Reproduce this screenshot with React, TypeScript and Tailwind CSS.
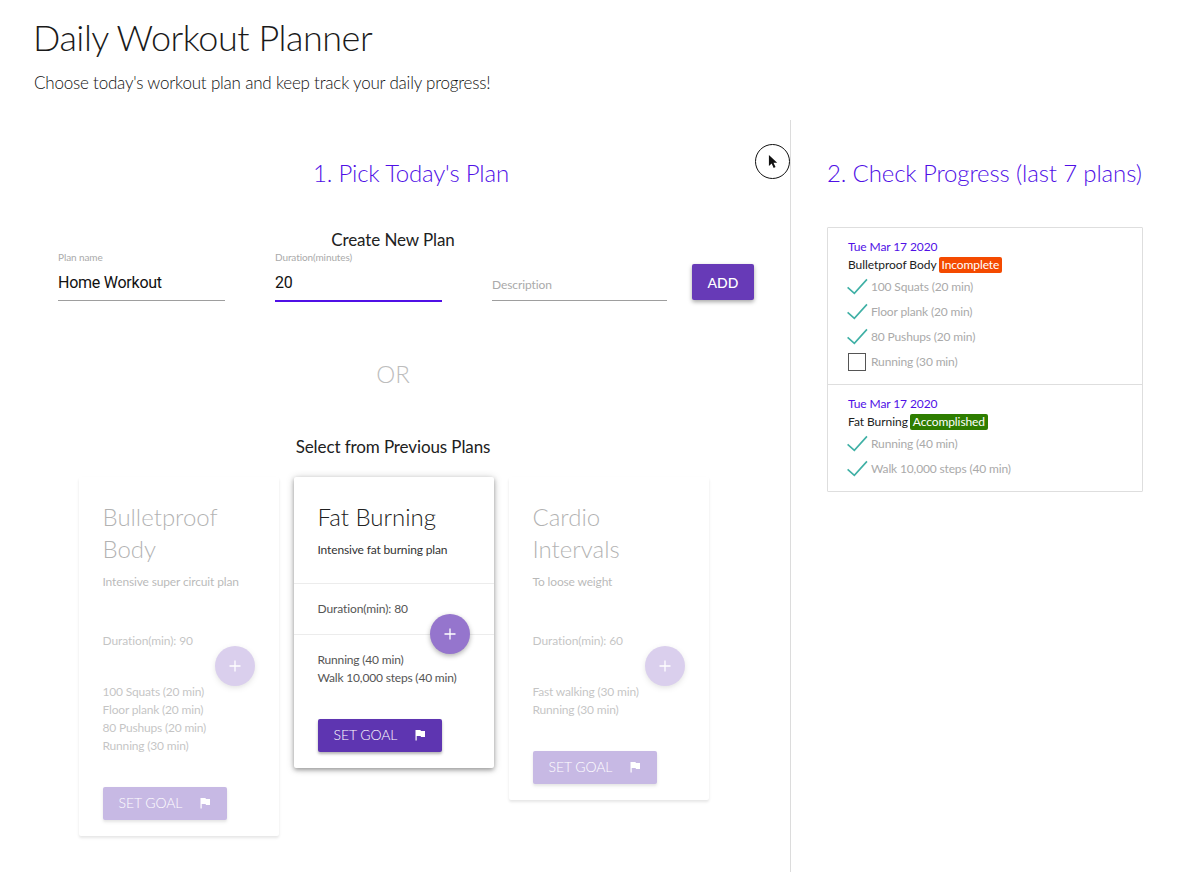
const LATO = "font-['Lato',sans-serif]";

const plans = [
  {
    title: ["Bulletproof", "Body"],
    description: "Intensive super circuit plan",
    duration: 90,
    steps: ["100 Squats (20 min)", "Floor plank (20 min)", "80 Pushups (20 min)", "Running (30 min)"],
    active: false,
  },
  {
    title: ["Fat Burning"],
    description: "Intensive fat burning plan",
    duration: 80,
    steps: ["Running (40 min)", "Walk 10,000 steps (40 min)"],
    active: true,
  },
  {
    title: ["Cardio", "Intervals"],
    description: "To loose weight",
    duration: 60,
    steps: ["Fast walking (30 min)", "Running (30 min)"],
    active: false,
  },
];

const history = [
  {
    date: "Tue Mar 17 2020",
    name: "Bulletproof Body",
    status: "Incomplete",
    statusClass: "bg-[#f44a00]",
    items: [
      { label: "100 Squats (20 min)", done: true },
      { label: "Floor plank (20 min)", done: true },
      { label: "80 Pushups (20 min)", done: true },
      { label: "Running (30 min)", done: false },
    ],
  },
  {
    date: "Tue Mar 17 2020",
    name: "Fat Burning",
    status: "Accomplished",
    statusClass: "bg-[#2e7d00]",
    items: [
      { label: "Running (40 min)", done: true },
      { label: "Walk 10,000 steps (40 min)", done: true },
    ],
  },
];

function Field({ label, value, width, focused }: { label: string; value?: string; width: string; focused?: boolean }) {
  return (
    <div className={`${width} h-[52px] relative`}>
      {value ? (
        <>
          <div className="pt-[2px] text-[10px] leading-[12px] text-[#aaa] tracking-[-0.1px]">{label}</div>
          <div className="mt-[8px] text-[16px] leading-[24px] text-[#111] font-['Roboto',sans-serif] tracking-[-0.25px]">{value}</div>
        </>
      ) : (
        <div className="pt-[27px] text-[12px] leading-[18px] text-[#aaa] tracking-[-0.1px]">{label}</div>
      )}
      <div className={`absolute left-0 right-0 ${focused ? "bottom-[-1px] h-[2px] bg-[#5010e6]" : "bottom-0 h-px bg-[#9e9e9e]"}`} />
    </div>
  );
}

function PlanCard({ plan }: { plan: (typeof plans)[number] }) {
  const divider = plan.active ? "border-[#ececec]" : "border-transparent";
  return (
    <div
      className={`w-[200px] bg-white rounded-[2px] ${
        plan.active
          ? "shadow-[0_2px_4px_rgba(0,0,0,0.3),0_1px_8px_rgba(0,0,0,0.2)]"
          : "shadow-[0_2px_3px_rgba(0,0,0,0.1)]"
      }`}
    >
      <div className={plan.active ? "" : "opacity-[0.34]"}>
        <div className={`px-6 pt-6 pb-6 border-b ${divider}`}>
          <h3 className="text-[24px] leading-[32px] font-light text-[#212121]">
            {plan.title.map((line) => (
              <div key={line}>{line}</div>
            ))}
          </h3>
          <p className="mt-[8px] text-[12px] leading-[18px] text-[#333] tracking-[-0.15px]">{plan.description}</p>
        </div>
        <div className={`relative px-6 pt-4 pb-4 text-[12px] leading-[18px] text-[#555] tracking-[-0.1px] border-b ${divider}`}>
          Duration(min): {plan.duration}
          <div className="absolute right-[24px] bottom-[-20px] size-[40px] rounded-full bg-[#9575cd] text-white flex items-center justify-center shadow-[0_2px_5px_rgba(0,0,0,0.3)]">
            <svg viewBox="0 0 14 14" className="size-[14px]" fill="none" stroke="currentColor" strokeWidth="1.3">
              <path d="M7 1.5v11M1.5 7h11" />
            </svg>
          </div>
        </div>
        <div className="px-6 pt-4 pb-4">
          <ul className="text-[12px] leading-[18px] text-[#555] tracking-[-0.18px]">
            {plan.steps.map((step) => (
              <li key={step}>{step}</li>
            ))}
          </ul>
          <button
            type="button"
            className="mt-8 w-[124px] h-[33px] rounded-[2px] bg-[#5e35b1] text-white text-[14px] font-light tracking-[-0.1px] flex items-center pl-[16px] pb-[2px] shadow-[0_2px_3px_rgba(0,0,0,0.3)]"
          >
            SET GOAL
            <svg viewBox="0 0 12 12" className="size-[12px] ml-[17px]" fill="currentColor">
              <path d="M1.5 1h5l.4 1H11v6H7l-.4-1H2.7v4.5H1.5z" />
            </svg>
          </button>
        </div>
      </div>
    </div>
  );
}

function ProgressRow({ label, done }: { label: string; done: boolean }) {
  return (
    <li className="flex items-center h-[25px] text-[12px] text-[#aaa] tracking-[-0.15px]">
      <span className="w-[24px] flex justify-center -ml-[3px] mr-[2px]">
        {done ? (
          <svg viewBox="0 0 24 20" className="w-[23px] h-[18px]" fill="none" stroke="#3fb0a5" strokeWidth="1.8">
            <path d="M1 10.5l7.5 6.5L22.5 1.5" />
          </svg>
        ) : (
          <span className="block size-[18px] border border-[#555]" />
        )}
      </span>
      {label}
    </li>
  );
}

export default function App() {
  return (
    <div className={`${LATO} w-[1185px] h-[872px] bg-white overflow-hidden relative text-[#212121]`}>
      <header className="pl-[33px] h-[120px]">
        <h1 className="pt-[15px] text-[36px] leading-[44px] font-light text-[#1a1a1a] tracking-[-0.47px]">Daily Workout Planner</h1>
        <p className="mt-[12px] pl-px text-[17px] leading-[24px] font-light text-[#111] tracking-[-0.21px]">
          Choose today's workout plan and keep track your daily progress!
        </p>
      </header>

      <div className="flex h-[752px]">
        <section className="relative w-[791px] border-r border-[#dcdcdc]">
          <h2 className="pt-[37px] pl-[32px] text-center text-[24px] leading-[32px] font-light text-[#5010e6] tracking-[-0.2px]">
            1. Pick Today's Plan
          </h2>
          <h3 className="mt-[39px] text-center text-[17px] leading-[24px] text-[#212121] tracking-[-0.1px] -ml-[4px]">Create New Plan</h3>
          <div className="flex items-start pl-[58px] -mt-[3px]">
            <Field label="Plan name" value="Home Workout" width="w-[167px]" />
            <div className="w-[50px]" />
            <Field label="Duration(minutes)" value="20" width="w-[167px]" focused />
            <div className="w-[50px]" />
            <Field label="Description" width="w-[175px]" />
            <button
              type="button"
              className="ml-[25px] mt-[15px] w-[62px] h-[36px] rounded-[2px] bg-[#673ab7] text-white text-[14px] font-medium shadow-[0_2px_4px_rgba(0,0,0,0.35)]"
            >
              ADD
            </button>
          </div>
          <div className="mt-[57px] text-center text-[24px] leading-[32px] font-light text-[#bdbdbd] -ml-[4px]">OR</div>
          <h3 className="mt-[45px] text-center text-[17px] leading-[24px] text-[#212121] tracking-[-0.1px] -ml-[4px]">
            Select from Previous Plans
          </h3>
          <div className="mt-[18px] flex items-start justify-center gap-[15px] -ml-[3px]">
            {plans.map((plan) => (
              <PlanCard key={plan.description} plan={plan} />
            ))}
          </div>
          {/* cursor highlight from the recording */}
          <div className="absolute left-[755px] top-[24px] size-[35px] rounded-full border border-[#111] flex items-center justify-center">
            <svg viewBox="0 0 12 16" className="w-[11px] h-[15px] ml-[1px]" fill="#111">
              <path d="M1 1v12l3-2.8L6.2 15l2-1-2.2-4.6H10z" />
            </svg>
          </div>
        </section>

        <section className="pl-[36px]">
          <h2 className="pt-[37px] text-[24px] leading-[32px] font-light text-[#5010e6] tracking-[-0.14px] whitespace-nowrap">
            2. Check Progress (last 7 plans)
          </h2>
          <div className="mt-[38px] w-[316px] border border-[#dedede] rounded-[1px]">
            {history.map((entry, i) => (
              <div key={entry.name} className={`px-[20px] pt-[10px] pb-[10px] ${i === 0 ? "border-b border-[#dedede]" : ""}`}>
                <div className="text-[12px] leading-[18px] text-[#5010e6] tracking-[-0.1px]">{entry.date}</div>
                <div className="text-[12px] leading-[18px] text-[#212121] tracking-[-0.05px] flex items-center">
                  {entry.name}
                  <span className={`ml-[2px] px-[3px] rounded-[2px] text-white leading-[16px] tracking-[-0.1px] ${entry.statusClass}`}>
                    {entry.status}
                  </span>
                </div>
                <ul>
                  {entry.items.map((item) => (
                    <ProgressRow key={item.label} label={item.label} done={item.done} />
                  ))}
                </ul>
              </div>
            ))}
          </div>
        </section>
      </div>
    </div>
  );
}
